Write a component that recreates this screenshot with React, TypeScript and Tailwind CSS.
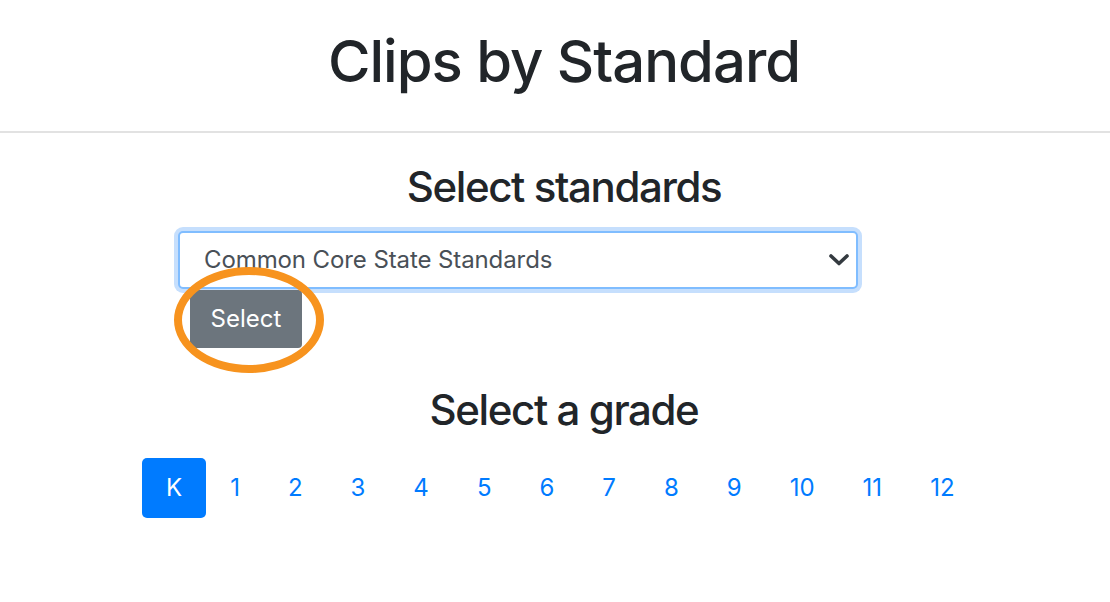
const grades = ["K", "1", "2", "3", "4", "5", "6", "7", "8", "9", "10", "11", "12"];

export default function App() {
  return (
    <div className="min-h-screen bg-white text-[#212529]" style={{ fontFamily: "Inter, 'Noto Sans', sans-serif" }}>
      {/* header */}
      <div className="h-[133px] border-b-2 border-[#e2e2e2] flex items-center justify-center pl-[18px]">
        <h1 className="text-[58px] font-medium tracking-[-1px] leading-none pb-[10px]">Clips by Standard</h1>
      </div>

      {/* standards */}
      <div className="pt-[30px]">
        <h2 className="text-center pl-[18px] text-[42px] font-medium leading-[48px] tracking-[-1.4px]">Select standards</h2>

        <div className="ml-[178px] mt-[20px] w-[680px]">
          <div className="h-[58px] rounded-[5px] border-2 border-[#80bdff] bg-white shadow-[0_0_0_4px_#c6dffd] flex items-center justify-between pl-[24px] pr-[6px]">
            <span className="text-[24px] text-[#495057] tracking-[-0.1px]">Common Core State Standards</span>
            <svg width="20" height="12" viewBox="0 0 20 12" className="mr-[1px]">
              <polyline points="2,2 10,9.5 18,2" fill="none" stroke="#343a40" strokeWidth="3.6" strokeLinecap="round" strokeLinejoin="round" />
            </svg>
          </div>

          <div className="relative w-fit ml-[12px] mt-[1px]">
            <button className="relative h-[58px] w-[112px] bg-[#6c757d] text-white text-[24px] rounded-[4px]">Select</button>
            <div className="absolute left-[-16px] top-[-23px] w-[150px] h-[106px] rounded-[50%] border-[8px] border-[#f7931e] pointer-events-none" />
          </div>
        </div>

        <h2 className="text-center pl-[18px] text-[42px] font-medium leading-[48px] tracking-[-1.4px] mt-[38px]">Select a grade</h2>

        <div className="flex ml-[142px] mt-[24px]">
          {grades.map((g, i) => (
            <div
              key={g}
              className={
                i === 0
                  ? "h-[60px] px-[24px] flex items-center rounded-[5px] bg-[#007bff] text-white text-[24px]"
                  : "h-[60px] px-[24px] flex items-center text-[#007bff] text-[24px]"
              }
            >
              {g}
            </div>
          ))}
        </div>
      </div>
    </div>
  );
}
